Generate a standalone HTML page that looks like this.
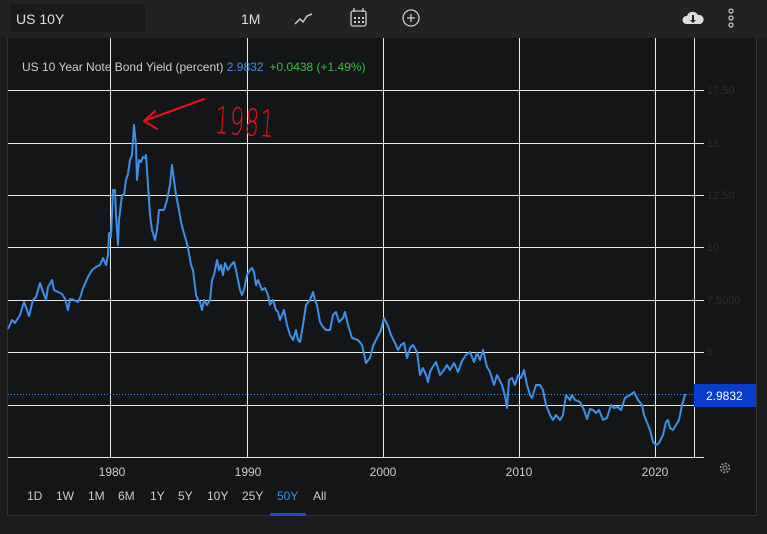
<!DOCTYPE html>
<html><head><style>
body{margin:0;width:767px;height:534px;background:#1c1c1e;overflow:hidden;font-family:"Liberation Sans",sans-serif;position:relative}
.top{position:absolute;left:0;top:0;width:767px;height:38px;background:#222224}
.sym{position:absolute;left:10px;top:4px;width:135px;height:28px;background:#1a1a1b;color:#ddd;font-size:14px;line-height:30px;padding-left:6px;box-sizing:border-box}
.t{position:absolute;color:#ddd;font-size:14px}
.chart{position:absolute;left:7px;top:38px;width:750px;height:478px;background:#141517;border-left:1px solid #333;border-right:1px solid #333;border-bottom:1px solid #333;box-sizing:border-box}
.rb{position:absolute;top:489px;color:#ccc;font-size:12px}
</style></head><body>
<div class="top"></div>
<div class="chart"></div>
<div class="sym">US 10Y</div>
<div class="t" style="left:241px;top:11px">1M</div>
<svg width="767" height="534" style="position:absolute;left:0;top:0">
<polyline points="295,24 300,19 303,22 307,16 312,14" fill="none" stroke="#ccc" stroke-width="1.5"/>
<rect x="351" y="11" width="15" height="15" rx="2" fill="none" stroke="#ccc" stroke-width="1.3"/>
<line x1="354" y1="8" x2="354" y2="12" stroke="#ccc" stroke-width="1.3"/><line x1="363" y1="8" x2="363" y2="12" stroke="#ccc" stroke-width="1.3"/>
<g fill="#ccc"><rect x="354" y="17" width="2" height="2"/><rect x="358" y="17" width="2" height="2"/><rect x="362" y="17" width="2" height="2"/><rect x="354" y="21" width="2" height="2"/><rect x="358" y="21" width="2" height="2"/><rect x="362" y="21" width="2" height="2"/></g>
<circle cx="411" cy="18" r="8" fill="none" stroke="#ccc" stroke-width="1.3"/>
<path d="M407 18h8M411 14v8" stroke="#ccc" stroke-width="1.3"/>
<path d="M686 24a4 4 0 0 1 1-8 6 6 0 0 1 11-1 4.5 4.5 0 0 1 2 9z" fill="#ddd"/>
<path d="M692 15v5h-2l3 3 3-3h-2v-5z" fill="#222"/>
<g fill="none" stroke="#ccc" stroke-width="1.2"><circle cx="731" cy="11" r="2"/><circle cx="731" cy="18" r="2"/><circle cx="731" cy="25" r="2"/></g>
<g stroke="#e8e8e8" stroke-width="1">
<line x1="110.5" y1="38" x2="110.5" y2="457"/><line x1="247.5" y1="38" x2="247.5" y2="457"/><line x1="383.5" y1="38" x2="383.5" y2="457"/><line x1="519.5" y1="38" x2="519.5" y2="457"/><line x1="655.5" y1="38" x2="655.5" y2="457"/>
<line x1="694.5" y1="38" x2="694.5" y2="457"/>
<line x1="8" y1="90.5" x2="704" y2="90.5"/><line x1="8" y1="143.5" x2="704" y2="143.5"/><line x1="8" y1="195.5" x2="704" y2="195.5"/><line x1="8" y1="247.5" x2="704" y2="247.5"/><line x1="8" y1="300.5" x2="704" y2="300.5"/><line x1="8" y1="352.5" x2="704" y2="352.5"/><line x1="8" y1="405.5" x2="704" y2="405.5"/><line x1="8" y1="457.5" x2="704" y2="457.5"/>
</g>
<g fill="#2c2c2c" font-size="11" font-family="Liberation Sans,sans-serif">
<text x="707" y="94">17.50</text><text x="707" y="147">15</text><text x="707" y="199">12.50</text><text x="707" y="251">10</text><text x="707" y="304">7.5000</text><text x="707" y="356">5</text>
</g>
<text x="22" y="71" fill="#ccc" font-size="12" font-family="Liberation Sans,sans-serif">US 10 Year Note Bond Yield (percent) <tspan fill="#3d8fe8">2.9832</tspan><tspan fill="#3fbf3f" dx="6">+0.0438 (+1.49%)</tspan></text>
<line x1="8" y1="394.5" x2="694" y2="394.5" stroke="#3d8fe8" stroke-dasharray="1,2"/>
<polyline fill="none" stroke="#3d8fe8" stroke-width="2" stroke-linejoin="round" points="8,329 12,320 15,323 20,315 24,302 27,310 29,316 33,300 36,297 40,283 43,292 46,300 48,287 50,284 52,280 54,290 58,292 62,294 65,299 68,310 70,299 74,300 78,302 80,298 83,288 88,277 92,270 96,267 100,265 103,258 106,265 108,255 109,233 111,237 113,190 115,190 116,215 118,245 119,220 122,195 124,195 126,180 128,174 130,160 132,155 134,125 136,145 137,180 139,160 141,162 143,157 145,158 146,155 148,185 150,215 152,230 155,240 157,230 159,210 161,210 164,210 167,200 170,185 172,165 174,180 176,195 179,210 181,222 183,230 186,240 188,248 191,265 193,270 196,295 198,300 200,302 202,310 204,300 207,305 210,300 212,280 214,275 217,260 219,270 221,265 223,275 225,263 228,270 231,265 234,262 236,270 240,290 242,295 244,290 247,275 250,270 252,268 254,272 256,285 258,280 262,290 265,288 268,295 270,305 273,300 276,310 278,312 280,320 284,310 287,325 290,335 293,340 296,330 298,340 300,342 303,325 306,305 310,300 313,292 315,300 317,305 320,322 323,327 326,330 330,330 333,315 336,312 339,322 343,318 345,312 348,325 352,338 358,340 362,345 366,363 370,358 373,346 377,338 381,330 384,318 388,326 391,335 395,343 398,350 401,345 404,343 407,358 410,348 413,345 417,352 420,375 423,368 426,375 428,382 430,372 432,368 436,362 440,375 444,370 447,365 450,370 454,363 458,372 462,361 466,355 470,352 474,362 477,353 480,360 483,350 487,367 490,372 494,385 497,375 502,385 505,396 507,408 509,380 512,378 515,385 518,375 521,378 524,370 527,385 530,395 532,398 536,385 540,385 543,390 546,405 550,415 553,420 556,415 560,420 563,415 566,395 570,400 572,395 575,400 580,402 584,410 587,419 590,409 593,410 596,413 599,410 603,420 607,418 611,405 614,408 618,407 621,410 625,398 630,395 634,392 638,400 642,405 644,415 648,425 650,430 653,442 656,445 659,443 663,435 666,422 668,420 670,428 673,430 676,425 679,420 682,405 685,395 686,394"/>
<rect x="694" y="384" width="62" height="23" fill="#0a3ccc"/>
<text x="706" y="400" fill="#fff" font-size="12" font-family="Liberation Sans,sans-serif">2.9832</text>
<g stroke="#e8101a" stroke-width="2" fill="none" stroke-linecap="round">
<path d="M204 99 L144 121 M144 121 L157 129 M144 121 L155 111"/>
</g>
<text fill="#e8101a" font-size="30" font-family="DejaVu Sans,sans-serif" font-weight="200" letter-spacing="1" transform="translate(214,133) rotate(4) scale(0.75,1.25)">1981</text>
<g fill="#ccc" font-size="12" font-family="Liberation Sans,sans-serif" text-anchor="middle">
<text x="112" y="476">1980</text><text x="248" y="476">1990</text><text x="383" y="476">2000</text><text x="519" y="476">2010</text><text x="655" y="476">2020</text>
</g>
<circle cx="725" cy="468" r="4.5" fill="none" stroke="#999" stroke-width="1.5" stroke-dasharray="2,1.5"/>
<circle cx="725" cy="468" r="2" fill="none" stroke="#999"/>
<rect x="270" y="513" width="36" height="3" fill="#1a48d8"/>
</svg>
<div class="rb" style="left:27px">1D</div><div class="rb" style="left:56px">1W</div><div class="rb" style="left:88px">1M</div><div class="rb" style="left:118px">6M</div><div class="rb" style="left:150px">1Y</div><div class="rb" style="left:178px">5Y</div><div class="rb" style="left:207px">10Y</div><div class="rb" style="left:242px">25Y</div><div class="rb" style="left:277px;color:#3d8fe8">50Y</div><div class="rb" style="left:313px">All</div>
</body></html>
